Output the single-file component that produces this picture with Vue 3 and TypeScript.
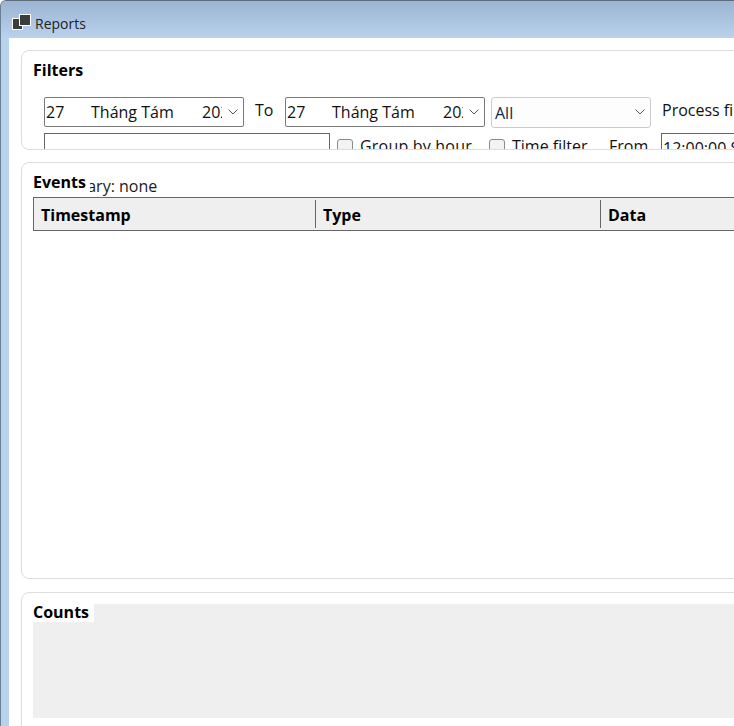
<script setup lang="ts">
const columns = [
  { label: 'Timestamp', width: 282 },
  { label: 'Type', width: 285 },
  { label: 'Data', width: 200 },
]
const dates = ['from', 'to']
</script>

<template>
  <div class="window">
    <header class="titlebar">
      <svg class="app-icon" width="19" height="17" viewBox="0 0 19 17">
        <rect x="0.5" y="4.5" width="10" height="11" fill="#3c3c3c" stroke="#fff" />
        <rect x="7.5" y="0.5" width="11" height="11" fill="#3c3c3c" stroke="#fff" />
      </svg>
      <span class="title">Reports</span>
    </header>

    <main class="client">
      <section class="card filters">
        <h2 class="card-title">Filters</h2>
        <div class="filter-row first">
          <template v-for="d in dates" :key="d">
            <div class="date-picker">
              <span class="day">27</span>
              <span class="month">Tháng Tám</span>
              <span class="year">2024</span>
              <svg class="chevron" width="10" height="6" viewBox="0 0 10 6">
                <path d="M0.5 0.5 L5 5 L9.5 0.5" fill="none" stroke="#555" />
              </svg>
            </div>
            <span v-if="d === 'from'" class="to-label">To</span>
          </template>
          <div class="combo">
            <span>All</span>
            <svg class="chevron" width="10" height="6" viewBox="0 0 10 6">
              <path d="M0.5 0.5 L5 5 L9.5 0.5" fill="none" stroke="#555" />
            </svg>
          </div>
          <span class="process-label">Process filter</span>
        </div>
        <div class="filter-row second">
          <div class="textbox"></div>
          <span class="check first-check"></span>
          <span class="check-label group-label">Group by hour</span>
          <span class="check"></span>
          <span class="check-label time-label">Time filter</span>
          <span class="from-label">From</span>
          <div class="time-box">12:00:00 SA</div>
        </div>
      </section>

      <section class="card events">
        <h2 class="card-title overlay">Events</h2>
        <div class="summary">Summary: none</div>
        <div class="table-head">
          <div v-for="c in columns" :key="c.label" class="th" :style="{ width: c.width + 'px' }">
            {{ c.label }}
          </div>
        </div>
      </section>

      <section class="card counts">
        <h2 class="card-title overlay">Counts</h2>
        <div class="chart"></div>
      </section>
    </main>
  </div>
</template>

<style>
html,
body {
  margin: 0;
  background: #fff;
  overflow: hidden;
}
</style>

<style scoped>
.window {
  width: 734px;
  height: 726px;
  overflow: hidden;
  box-sizing: border-box;
  padding-left: 9px;
  background: #b9d3ed;
  border-left: 1px solid #6d7f94;
  border-top: 1px solid #5f6f80;
  border-top-left-radius: 6px;
  margin-left: 0;
  font-family: "Open Sans", "Noto Sans", sans-serif;
  font-size: 16px;
  color: #111;
  position: relative;
}

.titlebar {
  position: absolute;
  top: 0;
  left: 0;
  right: 0;
  height: 37px;
  display: flex;
  align-items: flex-start;
  padding: 13px 0 0 11px;
  box-sizing: border-box;
  gap: 4px;
  background: linear-gradient(#9ab4d2, #b9d3ed);
}

.app-icon {
  flex: none;
}

.title {
  font-size: 14px;
  line-height: 20px;
  color: #222;
}

.client {
  position: absolute;
  top: 37px;
  left: 8px;
  width: 900px;
  height: 700px;
  background: #fff;
  padding: 12px 0 0 12px;
  box-sizing: border-box;
  display: flex;
  flex-direction: column;
  gap: 12px;
}

.card {
  position: relative;
  box-sizing: border-box;
  flex: none;
  width: 860px;
  border: 1px solid #ddd;
  border-radius: 8px;
  overflow: hidden;
  padding: 0 11px;
}

.filters {
  height: 100px;
}

.events {
  height: 417px;
}

.counts {
  height: 160px;
  margin-top: 1px;
}

.card-title {
  margin: 0;
  font-size: 16px;
  font-weight: 700;
  color: #000;
  line-height: 20px;
  padding-top: 9px;
}

.card-title.overlay {
  position: absolute;
  top: 9px;
  left: 11px;
  padding: 0 5px 0 0;
  background: #fff;
  z-index: 1;
}

.events .card-title.overlay {
  padding-right: 4px;
}

.filter-row {
  display: flex;
  align-items: center;
}

.first {
  margin-top: 17px;
  margin-left: 11px;
  height: 30px;
}

.second {
  margin-top: 6px;
  margin-left: 11px;
  height: 30px;
  align-items: flex-start;
}

.date-picker {
  position: relative;
  box-sizing: border-box;
  flex: none;
  width: 200px;
  height: 30px;
  border: 1px solid #7a7a7a;
  border-radius: 2px;
  background: #fff;
  line-height: 28px;
}

.day,
.month,
.year {
  position: absolute;
  top: 0;
}

.day {
  left: 1px;
}

.month {
  left: 46px;
}

.year {
  left: 157px;
  width: 20px;
  overflow: hidden;
  white-space: nowrap;
}

.chevron {
  position: absolute;
  right: 5px;
  top: 11px;
}

.to-label {
  flex: none;
  width: 41px;
  padding-left: 11px;
  box-sizing: border-box;
  margin-top: -4px;
}

.combo {
  position: relative;
  box-sizing: border-box;
  flex: none;
  width: 160px;
  height: 31px;
  margin-left: 6px;
  padding-left: 3px;
  border: 1px solid #ccc;
  border-radius: 3px;
  background: #fdfdfd;
  line-height: 30px;
  color: #0f2a47;
}

.process-label {
  margin-left: 11px;
  margin-top: -4px;
  white-space: nowrap;
}

.textbox {
  box-sizing: border-box;
  flex: none;
  width: 286px;
  height: 30px;
  border: 1px solid #666;
}

.check {
  box-sizing: border-box;
  flex: none;
  width: 16px;
  height: 16px;
  margin-top: 6px;
  border: 1px solid #8a8a8a;
  border-radius: 3px;
  background: #f3f3f3;
}

.first-check {
  margin-left: 7px;
}

.check-label {
  flex: none;
  white-space: nowrap;
  margin-left: 7px;
  line-height: 26px;
}

.group-label {
  width: 129px;
  letter-spacing: 0.2px;
}

.time-label {
  width: 97px;
}

.from-label {
  flex: none;
  width: 52px;
  line-height: 26px;
}

.time-box {
  box-sizing: border-box;
  flex: none;
  width: 120px;
  height: 30px;
  padding-left: 1px;
  border: 1px solid #666;
  line-height: 28px;
}

.summary {
  position: absolute;
  top: 12px;
  left: 17px;
  line-height: 22px;
  color: #1a1a1a;
}

.table-head {
  display: flex;
  box-sizing: border-box;
  margin-top: 34px;
  height: 34px;
  padding: 2px 0;
  border: 1px solid #666;
  background: #efefef;
  font-weight: 700;
  color: #000;
}

.th {
  box-sizing: border-box;
  flex: none;
  padding-left: 7px;
  line-height: 30px;
  height: 28px;
  border-right: 1px solid #666;
}

.th:last-child {
  border-right: none;
}

.chart {
  height: 114px;
  margin-top: 11px;
  background: #efefef;
}
</style>
